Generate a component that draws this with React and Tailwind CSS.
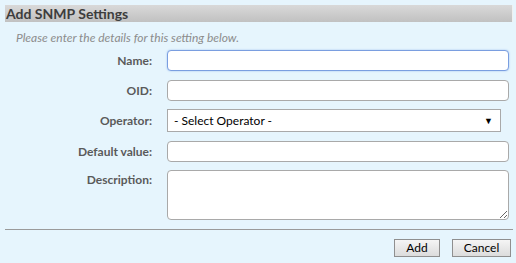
import React from 'react';

const font = { fontFamily: 'Lato, "Open Sans", sans-serif' };

function Row({ label, children, top = false, className = '' }) {
  return (
    <div className={`flex ${top ? 'items-start' : 'items-center'} ${className}`}>
      <label className={`w-[152px] text-right text-[12px] leading-[14px] font-bold text-[#5a5a5a] ${top ? 'pt-[3px]' : ''}`}>
        {label}
      </label>
      <div className="ml-[15px] flex-1">{children}</div>
    </div>
  );
}

export default function App() {
  return (
    <div className="w-[516px] h-[263px] bg-[#e6f5fd] pt-[5px] overflow-hidden" style={font}>
      <div className="ml-[5px] mr-[3px] h-[17px] bg-gradient-to-b from-[#d9d9d9] to-[#c1c1c1] border-r border-[#f0f0f0] flex items-center pl-[1px]">
        <h1 className="text-[14px] font-bold text-[#3d3d3d] leading-none">Add SNMP Settings</h1>
      </div>

      <p className="mt-[10px] ml-[16px] text-[12px] italic text-[#8c8c8c] leading-none">
        Please enter the details for this setting below.
      </p>

      <div className="mt-[6px] mr-[7px] flex flex-col">
        <Row label="Name:">
          <input
            autoFocus
            className="block w-full h-[21px] rounded-[4px] bg-white border border-[#7a9ee0] shadow-[0_0_2px_#9dbff0] outline-none px-1 text-[12px]"
          />
        </Row>
        <Row label="OID:" className="mt-[9px]">
          <input className="block w-full h-[21px] rounded-[4px] bg-white border border-[#a9a9a9] outline-none px-1 text-[12px]" />
        </Row>
        <Row label="Operator:" className="mt-[8px]">
          <div className="mr-[8px] h-[23px] bg-white border border-[#a9a9a9] flex items-center justify-between pl-[6px] pr-[7px]">
            <span className="text-[12px] leading-none text-black">- Select Operator -</span>
            <span className="text-[9px] leading-none text-black">▼</span>
          </div>
        </Row>
        <Row label="Default value:" className="mt-[9px]">
          <input className="block w-full h-[21px] rounded-[4px] bg-white border border-[#a9a9a9] outline-none px-1 text-[12px]" />
        </Row>
        <Row label="Description:" top className="mt-[8px]">
          <textarea className="block w-full h-[50px] rounded-[4px] bg-white border border-[#a9a9a9] outline-none px-1 text-[12px]" />
        </Row>
      </div>

      <div className="mt-[9px] ml-[5px] mr-[3px] h-px bg-[#9a9a9a]" />

      <div className="mt-[9px] mr-[5px] flex justify-end gap-[12px]">
        <button className="w-[46px] h-[18px] bg-gradient-to-b from-[#f5f5f5] to-[#dcdcdc] border border-[#8f8f8f] text-[12px] text-black leading-none">
          Add
        </button>
        <button className="w-[59px] h-[18px] bg-gradient-to-b from-[#f5f5f5] to-[#dcdcdc] border border-[#8f8f8f] text-[12px] text-black leading-none">
          Cancel
        </button>
      </div>
    </div>
  );
}
